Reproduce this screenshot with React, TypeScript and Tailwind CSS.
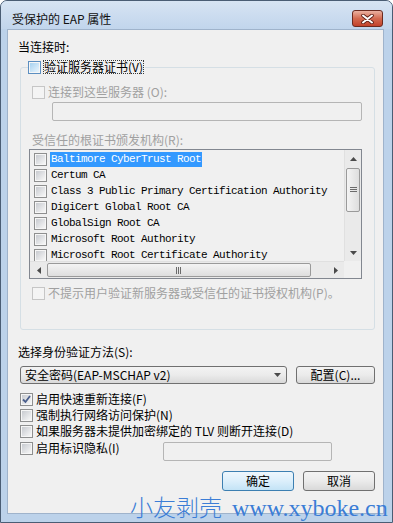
import React from 'react';

const F = "font-['Noto_Sans_CJK_SC',sans-serif]";
const MONO = "font-['Liberation_Mono','Noto_Sans_CJK_SC',monospace]";

type Kind = 'normal' | 'disabled' | 'hot' | 'checked';

function Check({ kind = 'normal' }: { kind?: Kind }) {
  if (kind === 'disabled') {
    return <span className="block w-[13px] h-[13px] shrink-0 border border-[#c6c6c6] bg-[#f4f4f4]" />;
  }
  const outer = kind === 'hot' ? 'border-[#5c8fc1]' : 'border-[#8e8f8f]';
  const inner = kind === 'hot' ? 'from-[#a7d2f0] to-[#e9f5fd]' : 'from-[#c8cbd0] to-[#f7f7f7]';
  return (
    <span className={`relative block w-[13px] h-[13px] shrink-0 border ${outer} bg-[#f6f6f6] p-[1px]`}>
      <span className={`block w-full h-full bg-linear-to-br ${inner}`} />
      {kind === 'checked' && (
        <svg className="absolute left-0 top-0" width="11" height="11" viewBox="0 0 11 11">
          <path d="M2 5.5 L4.5 8 L9 2" fill="none" stroke="#4b5f8c" strokeWidth="1.8" />
        </svg>
      )}
    </span>
  );
}

function Tri({ dir }: { dir: 'up' | 'down' | 'left' | 'right' }) {
  const pts = {
    up: '0,4 7,4 3.5,0',
    down: '0,0 7,0 3.5,4',
    left: '4,0 4,7 0,3.5',
    right: '0,0 0,7 4,3.5',
  }[dir];
  const w = dir === 'up' || dir === 'down' ? 7 : 4;
  const h = dir === 'up' || dir === 'down' ? 4 : 7;
  return (
    <svg width={w} height={h} viewBox={`0 0 ${w} ${h}`}>
      <polygon points={pts} fill="#4a4a4a" />
    </svg>
  );
}

const certs = [
  'Baltimore CyberTrust Root',
  'Certum CA',
  'Class 3 Public Primary Certification Authority',
  'DigiCert Global Root CA',
  'GlobalSign Root CA',
  'Microsoft Root Authority',
  'Microsoft Root Certificate Authority',
];

function CertList() {
  return (
    <div className="mt-[1px] -ml-[3px] w-[333px] h-[130px] border border-[#828790] bg-[#f0f0f0]">
      <div className="grid grid-cols-[314px_17px] grid-rows-[111px_17px] h-full">
        <div className="pt-[1px] overflow-hidden">
          {certs.map((c, i) => (
            <div key={c} className="flex items-center h-[16px] pl-[4px] gap-[3px] whitespace-nowrap">
              <Check />
              <span
                className={`h-[15px] leading-[15px] px-[1px] text-[11px] tracking-[-0.6px] ${MONO} ${
                  i === 0 ? 'bg-[#3399ff] text-white' : 'text-black'
                }`}
              >
                {c}
              </span>
            </div>
          ))}
        </div>
        <div className="flex flex-col bg-[#eaeaea] border-l border-[#e0e0e0]">
          <div className="h-[17px] flex items-center justify-center">
            <Tri dir="up" />
          </div>
          <div className="mt-[1px] mx-[1px] h-[44px] rounded-[2px] border border-[#9a9a9a] bg-linear-to-r from-[#f4f4f4] to-[#dedede] flex items-center justify-center">
            <svg width="7" height="6" viewBox="0 0 7 6">
              <path d="M0 0.5H7M0 2.5H7M0 4.5H7" stroke="#6b6b6b" strokeWidth="1" />
            </svg>
          </div>
          <div className="flex-1" />
          <div className="h-[17px] flex items-center justify-center">
            <Tri dir="down" />
          </div>
        </div>
        <div className="flex bg-[#eaeaea] border-t border-[#e0e0e0]">
          <div className="w-[17px] flex items-center justify-center">
            <Tri dir="left" />
          </div>
          <div className="my-[1px] w-[264px] rounded-[2px] border border-[#9a9a9a] bg-linear-to-b from-[#f4f4f4] to-[#dedede] flex items-center justify-center">
            <svg width="6" height="7" viewBox="0 0 6 7">
              <path d="M0.5 0V7M2.5 0V7M4.5 0V7" stroke="#6b6b6b" strokeWidth="1" />
            </svg>
          </div>
          <div className="flex-1" />
          <div className="w-[17px] flex items-center justify-center">
            <Tri dir="right" />
          </div>
        </div>
        <div className="bg-[#f0f0f0]" />
      </div>
    </div>
  );
}

function Row({ kind, children, className = '' }: { kind: Kind; children: React.ReactNode; className?: string }) {
  return (
    <div className={`flex items-center h-[16px] gap-[3px] whitespace-nowrap ${className}`}>
      <Check kind={kind} />
      <span className={`leading-[16px] ${kind === 'disabled' ? 'text-[#a0a0a0]' : 'text-black'}`}>{children}</span>
    </div>
  );
}

export default function App() {
  return (
    <div className={`relative w-[393px] h-[523px] overflow-hidden bg-white text-[12px] text-black ${F}`}>
      <div className="flex flex-col h-full rounded-t-[7px] border border-[#4a5d74] bg-[#bcd2ea]">
        {/* title bar */}
        <div className="flex items-start justify-between h-[28px] pt-[9px] pl-[11px] pr-[9px] rounded-t-[6px] bg-linear-to-b from-[#d7e4f3] to-[#c1d5ec]">
          <span className="leading-[17px] text-[#111]">受保护的 EAP 属性</span>
          <div className="w-[31px] h-[17px] rounded-[3px] border border-[#6b2a1f] bg-linear-to-b from-[#eab1a1] via-[#d36a50] to-[#c2412a] flex items-center justify-center">
            <svg width="13" height="10" viewBox="0 0 13 10">
              <path d="M2 1.5 L11 8.5 M11 1.5 L2 8.5" stroke="#5a1d14" strokeWidth="3.6" strokeLinecap="round" />
              <path d="M2 1.5 L11 8.5 M11 1.5 L2 8.5" stroke="#ffffff" strokeWidth="2" strokeLinecap="round" />
            </svg>
          </div>
        </div>

        <div className="flex flex-1 pl-[6px] pr-[8px] pb-[8px]">
          <div className="flex flex-col flex-1 border border-[#9fb3cb] bg-[#f0f0f0]">
            <div className="mt-[9px] ml-[10px] h-[16px] leading-[16px]">当连接时:</div>

            {/* group box */}
            <div className="relative mt-[12px] ml-[12px] w-[355px] h-[263px] rounded-[3px] border border-[#d5dfe5]">
              <div className="absolute -top-[8px] left-[7px] flex items-center gap-[2px] bg-[#f0f0f0] pr-[1px]">
                <Check kind="hot" />
                <span className="h-[14px] leading-[12px] border border-dotted border-[#3a3a3a] whitespace-nowrap">
                  验证服务器证书(V)
                </span>
              </div>
              <div className="flex flex-col pl-[11px]">
                <Row kind="disabled" className="mt-[16px]">
                  连接到这些服务器 (O):
                </Row>
                <div className="mt-[2px] ml-[20px] w-[310px] h-[19px] rounded-[2px] border border-[#b5b5b5]" />
                <div className="mt-[11px] h-[16px] leading-[16px] text-[#a0a0a0]">受信任的根证书颁发机构(R):</div>
                <CertList />
                <Row kind="disabled" className="mt-[6px]">
                  不提示用户验证新服务器或受信任的证书授权机构(P)。
                </Row>
              </div>
            </div>

            <div className="mt-[14px] ml-[10px] h-[16px] leading-[16px]">选择身份验证方法(S):</div>
            <div className="flex mt-[6px] ml-[12px]">
              <div className="flex items-center justify-between w-[267px] h-[18px] pl-[4px] pr-[5px] rounded-[3px] border border-[#707070] bg-linear-to-b from-[#f3f3f3] via-[#ebebeb] to-[#d9d9d9]">
                <span className="leading-[16px] whitespace-nowrap">安全密码(EAP-MSCHAP v2)</span>
                <Tri dir="down" />
              </div>
              <div className="ml-[9px] w-[79px] h-[18px] rounded-[3px] border border-[#707070] bg-linear-to-b from-[#f3f3f3] via-[#ebebeb] to-[#d9d9d9] flex items-center justify-center leading-[16px]">
                配置(C)...
              </div>
            </div>

            <div className="flex flex-col ml-[12px] mt-[7px]">
              <Row kind="checked">启用快速重新连接(F)</Row>
              <Row kind="normal">强制执行网络访问保护(N)</Row>
              <Row kind="normal">如果服务器未提供加密绑定的 TLV 则断开连接(D)</Row>
              <div className="flex items-start mt-[1px]">
                <div className="w-[143px]">
                  <Row kind="normal">启用标识隐私(I)</Row>
                </div>
                <div className="mt-[2px] w-[169px] h-[19px] rounded-[2px] border border-[#b5b5b5]" />
              </div>
            </div>

            <div className="flex justify-end gap-[9px] mt-[10px] pr-[8px]">
              <div className="w-[72px] h-[20px] rounded-[3px] border border-[#3c7fb1] bg-linear-to-b from-[#eef7fd] via-[#dceffb] to-[#c3e3f6] flex items-center justify-center leading-[16px]">
                确定
              </div>
              <div className="w-[72px] h-[20px] rounded-[3px] border border-[#707070] bg-linear-to-b from-[#f3f3f3] via-[#ebebeb] to-[#d9d9d9] flex items-center justify-center leading-[16px]">
                取消
              </div>
            </div>
          </div>
        </div>
      </div>

      {/* watermark */}
      <div className="absolute left-[130px] top-[494px] flex items-baseline whitespace-nowrap text-[#3b7dd6] leading-[24px]">
        <span className="text-[23px] font-light">小友剥壳</span>
        <span className="ml-[10px] text-[24px] font-['Liberation_Serif',serif]">www.xyboke.cn</span>
      </div>
    </div>
  );
}
